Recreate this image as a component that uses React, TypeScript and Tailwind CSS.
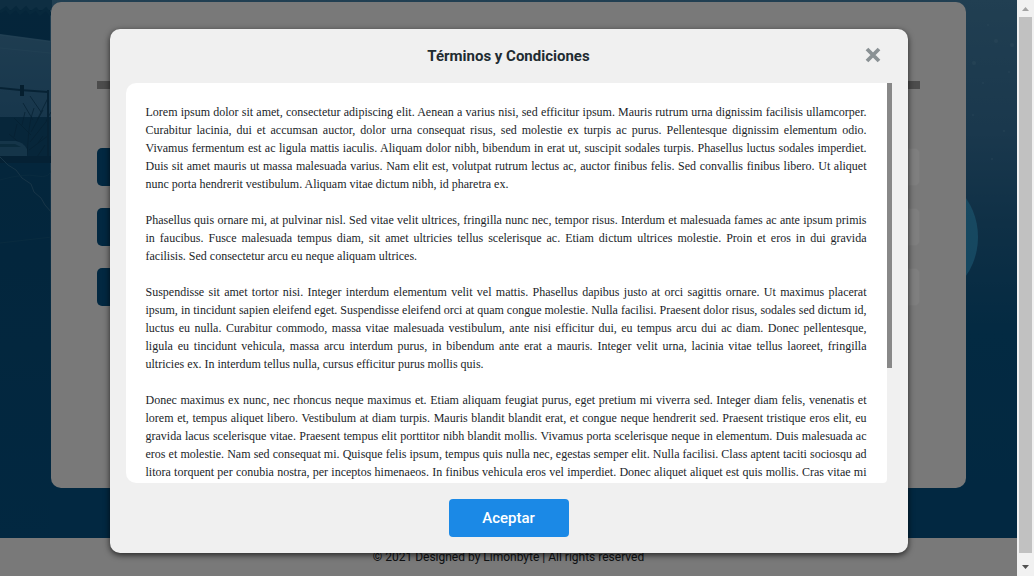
import React from "react";

const paragraphs = [
  "Lorem ipsum dolor sit amet, consectetur adipiscing elit. Aenean a varius nisi, sed efficitur ipsum. Mauris rutrum urna dignissim facilisis ullamcorper. Curabitur lacinia, dui et accumsan auctor, dolor urna consequat risus, sed molestie ex turpis ac purus. Pellentesque dignissim elementum odio. Vivamus fermentum est ac ligula mattis iaculis. Aliquam dolor nibh, bibendum in erat ut, suscipit sodales turpis. Phasellus luctus sodales imperdiet. Duis sit amet mauris ut massa malesuada varius. Nam elit est, volutpat rutrum lectus ac, auctor finibus felis. Sed convallis finibus libero. Ut aliquet nunc porta hendrerit vestibulum. Aliquam vitae dictum nibh, id pharetra ex.",
  "Phasellus quis ornare mi, at pulvinar nisl. Sed vitae velit ultrices, fringilla nunc nec, tempor risus. Interdum et malesuada fames ac ante ipsum primis in faucibus. Fusce malesuada tempus diam, sit amet ultricies tellus scelerisque ac. Etiam dictum ultrices molestie. Proin et eros in dui gravida facilisis. Sed consectetur arcu eu neque aliquam ultrices.",
  "Suspendisse sit amet tortor nisi. Integer interdum elementum velit vel mattis. Phasellus dapibus justo at orci sagittis ornare. Ut maximus placerat ipsum, in tincidunt sapien eleifend eget. Suspendisse eleifend orci at quam congue molestie. Nulla facilisi. Praesent dolor risus, sodales sed dictum id, luctus eu nulla. Curabitur commodo, massa vitae malesuada vestibulum, ante nisi efficitur dui, eu tempus arcu dui ac diam. Donec pellentesque, ligula eu tincidunt vehicula, massa arcu interdum purus, in bibendum ante erat a mauris. Integer velit urna, lacinia vitae tellus laoreet, fringilla ultricies ex. In interdum tellus nulla, cursus efficitur purus mollis quis.",
  "Donec maximus ex nunc, nec rhoncus neque maximus et. Etiam aliquam feugiat purus, eget pretium mi viverra sed. Integer diam felis, venenatis et lorem et, tempus aliquet libero. Vestibulum at diam turpis. Mauris blandit blandit erat, et congue neque hendrerit sed. Praesent tristique eros elit, eu gravida lacus scelerisque vitae. Praesent tempus elit porttitor nibh blandit mollis. Vivamus porta scelerisque neque in elementum. Duis malesuada ac eros et molestie. Nam sed consequat mi. Quisque felis ipsum, tempus quis nulla nec, egestas semper elit. Nulla facilisi. Class aptent taciti sociosqu ad litora torquent per conubia nostra, per inceptos himenaeos. In finibus vehicula eros vel imperdiet. Donec aliquet aliquet est quis mollis. Cras vitae mi",
];

/* Night street scene behind the form card: building, traffic light, bare tree, parked car. */
function StreetScene() {
  return (
    <svg
      className="absolute inset-0 h-full w-full"
      viewBox="0 0 1017 538"
      preserveAspectRatio="none"
      aria-hidden="true"
    >
      <defs>
        <linearGradient id="sky" x1="0" y1="0" x2="0" y2="1">
          <stop offset="0" stopColor="#427ea4" />
          <stop offset="0.25" stopColor="#34709a" />
          <stop offset="0.42" stopColor="#1e608c" />
          <stop offset="0.62" stopColor="#075484" />
          <stop offset="1" stopColor="#045082" />
        </linearGradient>
        <linearGradient id="street" x1="0" y1="0" x2="0" y2="1">
          <stop offset="0" stopColor="#0a4a74" />
          <stop offset="0.3" stopColor="#084c78" />
          <stop offset="1" stopColor="#045082" />
        </linearGradient>
        <linearGradient id="wall" x1="0" y1="0" x2="0" y2="1">
          <stop offset="0" stopColor="#3d7aa2" />
          <stop offset="1" stopColor="#2f6d98" />
        </linearGradient>
        <linearGradient id="orb" x1="0" y1="0" x2="0" y2="1">
          <stop offset="0" stopColor="#3494c2" />
          <stop offset="1" stopColor="#268cc0" />
        </linearGradient>
      </defs>
      <rect width="1017" height="538" fill="url(#sky)" />
      <rect width="50" height="538" fill="url(#street)" />
      <rect width="52" height="10" fill="#1c5c84" />
      <path
        d="M0 12l6-4 4 5 6-5 4 5 6-5 4 5 6-4 4 5 6-5 4 5 6-4"
        fill="none"
        stroke="#0f5078"
        strokeWidth="3"
      />
      <path d="M0 34L60 42V119H0Z" fill="url(#wall)" />
      <path d="M0 35L60 43M0 48L60 54" stroke="#4886ab" opacity="0.6" />
      <path d="M0 117H60V160H0Z" fill="#0f4c74" />
      <path
        d="M26 162C29 142 27 128 34 108M31 135L14 118M31 132L43 110M30 142L49 118M28 150L9 134M29 150L49 135M33 120L23 103M37 120L48 98M41 112L30 96M22 125L25 112M14 137L17 124M20 160L12 145M35 160L45 145M38 143L43 136M46 121L51 112"
        fill="none"
        stroke="#0b4063"
        strokeWidth="1"
        opacity="0.75"
      />
      <path d="M0 88L20 90L48 92M48 90V160" fill="none" stroke="#0e4569" strokeWidth="2" />
      <path d="M20 85H24V96H20Z" fill="#0a3c5c" />
      <path d="M0 141H16Q23 142 27 149V156H0Z" fill="#2a6a93" />
      <path d="M0 144H15L21 147H0Z" fill="#175679" />
      <path d="M0 156H60V163H0Z" fill="#0a4368" />
      <path
        d="M0 157L8 165L16 170L22 178L31 184L34 192L41 198L45 205L52 213"
        fill="none"
        stroke="#2f6a8e"
        strokeWidth="1"
      />
      <path
        d="M0 180Q24 173 37 176T52 168M0 243L52 237"
        fill="none"
        stroke="#175a80"
        opacity="0.7"
      />
      <g fill="#5a94b6" opacity="0.45">
        <circle cx="996" cy="41" r="2" />
        <circle cx="974" cy="63" r="2" />
        <circle cx="988" cy="25" r="1" />
        <circle cx="1012" cy="45" r="2" />
        <circle cx="983" cy="83" r="1" />
        <circle cx="973" cy="115" r="1" />
        <circle cx="1004" cy="131" r="1" />
        <circle cx="1009" cy="72" r="1" />
        <circle cx="992" cy="159" r="1" />
      </g>
      <circle cx="909" cy="237" r="69" fill="url(#orb)" />
    </svg>
  );
}

function FormField({ label }: { label: string }) {
  return (
    <div className="flex h-[38px]">
      <span className="w-10 rounded-l-[5px] bg-[#045082]" />
      <input
        type="text"
        aria-label={label}
        tabIndex={-1}
        className="min-w-0 flex-1 rounded-r-[5px] border border-[#f6f6f6] bg-white"
      />
    </div>
  );
}

function PageScrollbar() {
  return (
    <div className="flex w-[17px] shrink-0 flex-col items-center bg-[#f1f1f1]" aria-hidden="true">
      <svg className="h-[17px] w-[17px]" viewBox="0 0 17 17">
        <path d="M5 11L8.5 7L12 11Z" fill="#a3a3a3" />
      </svg>
      <div className="w-[13px] flex-1 bg-[#c1c1c1]" />
      <svg className="h-[23px] w-[17px]" viewBox="0 0 17 23">
        <path d="M5 12L8.5 16L12 12Z" fill="#505050" />
      </svg>
    </div>
  );
}

function TermsDialog() {
  return (
    <div
      role="dialog"
      aria-modal="true"
      aria-labelledby="terms-title"
      className="flex w-full max-w-[798px] flex-col gap-4 rounded-[10px] bg-[#f0f0f0] p-4 shadow-[0_2px_6px_rgba(0,0,0,0.7)]"
    >
      <header className="grid h-[22px] grid-cols-[1fr_auto_1fr] items-center">
        <h2 id="terms-title" className="col-start-2 text-[15px] leading-[22px] font-bold text-[#212b31]">
          Términos y Condiciones
        </h2>
        <button type="button" aria-label="Cerrar" className="mr-[11px] justify-self-end pb-[3px]">
          <svg className="block h-4 w-4" viewBox="0 0 16 16">
            <path d="M2 2L14 14M14 2L2 14" stroke="#8a9194" strokeWidth="3.8" />
          </svg>
        </button>
      </header>
      <div className="flex h-[400px]">
        <div className="flex flex-1 flex-col gap-[18px] overflow-y-auto rounded-l-[10px] rounded-br bg-white p-5 text-justify font-['Liberation_Serif',serif] text-[12px] leading-[18px] text-[#212529] [scrollbar-width:none]">
          {paragraphs.map((text, i) => (
            <p key={i} className="last:[text-align-last:justify]">
              {text}
            </p>
          ))}
        </div>
        <div className="w-[5px] bg-[#f0f0f0]" aria-hidden="true">
          <div className="h-[285px] bg-[#888888]" />
        </div>
      </div>
      <button
        type="button"
        className="h-[38px] w-[120px] self-center rounded bg-[#1b89e6] text-[15px] font-medium text-white"
      >
        Aceptar
      </button>
    </div>
  );
}

export default function App() {
  return (
    <div className="flex h-screen overflow-hidden font-['Roboto',sans-serif]">
      <div className="relative flex min-w-0 flex-1 flex-col">
        <main className="relative flex-1 pt-[2px] pb-[50px]">
          <StreetScene />
          <section className="relative mx-auto h-full w-[90%] rounded-[10px] bg-[#f2f2f2] px-[46px] pt-[79px]">
            <div className="h-2 bg-[#989898]" />
            <div className="mt-[59px] flex flex-col gap-[22px]">
              <FormField label="Nombre" />
              <FormField label="Correo" />
              <FormField label="Teléfono" />
            </div>
          </section>
        </main>
        <footer className="flex h-[38px] items-center justify-center bg-[#f2f2f2] text-[12px] text-[#212529]">
          © 2021 Designed by Limonbyte | All rights reserved
        </footer>
        <div className="absolute inset-0 flex items-start justify-center bg-black/50 pt-[29px]">
          <TermsDialog />
        </div>
      </div>
      <PageScrollbar />
    </div>
  );
}
